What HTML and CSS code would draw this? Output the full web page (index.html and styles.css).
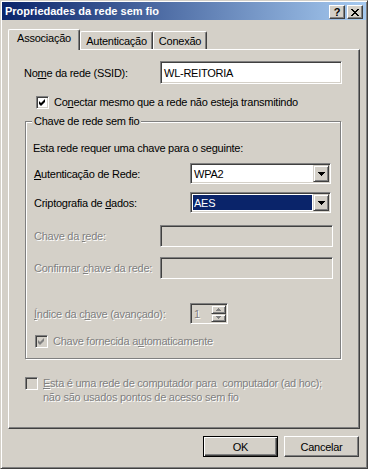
FILE: index.html
```html
<!DOCTYPE html>
<html lang="pt">
<head>
    <meta charset="UTF-8">
    <title>Propriedades da rede sem fio</title>
    <link rel="stylesheet" href="styles.css">
</head>
<body>
    <div class="window">
        <div class="titlebar">
            <span class="title">Propriedades da rede sem fio</span>
            <div class="caption-buttons">
                <span class="cap-btn help">?</span>
                <span class="cap-btn">
                    <svg width="8" height="7" viewBox="0 0 8 7"><path d="M0 0h2v1h1v1h2v-1h1v-1h2v1h-1v1h-1v1h-1v1h1v1h1v1h1v1h-2v-1h-1v-1h-2v1h-1v1h-2v-1h1v-1h1v-1h1v-1h-1v-1h-1v-1h-1z"/></svg>
                </span>
            </div>
        </div>

        <div class="client">
            <div class="tabs">
                <div class="tab active tab-assoc">Associação</div>
                <div class="tab tab-auth">Autenticação</div>
                <div class="tab tab-conn">Conexão</div>
            </div>

            <div class="panel">
                <div class="row ssid-row">
                    <span class="lbl lbl-ssid">No<u>m</u>e da rede (SSID):</span>
                    <div class="textbox ssid-box">WL-REITORIA</div>
                </div>

                <div class="check-row broadcast-row">
                    <span class="checkbox">
                        <svg width="7" height="7" viewBox="0 0 7 7"><polygon points="0,2 2,4 6,0 6,3 2,7 0,5"/></svg>
                    </span>
                    <span>Co<u>n</u>ectar mesmo que a rede não esteja transmitindo</span>
                </div>

                <div class="group">
                    <span class="group-title">Chave de rede sem fio</span>

                    <div class="intro">Esta rede requer uma chave para o seguinte:</div>

                    <div class="row combo-row">
                        <span class="lbl lbl-wide"><u>A</u>utenticação de Rede:</span>
                        <div class="combo">
                            <span class="combo-text">WPA2</span>
                            <span class="combo-btn">
                                <svg width="7" height="4" viewBox="0 0 7 4"><path d="M0 0h7v1h-1v1h-1v1h-1v1h-1v-1h-1v-1h-1v-1h-1z"/></svg>
                            </span>
                        </div>
                    </div>

                    <div class="row combo-row crypt-row">
                        <span class="lbl lbl-wide">Criptografia de <u>d</u>ados:</span>
                        <div class="combo">
                            <span class="combo-text selected">AES</span>
                            <span class="combo-btn">
                                <svg width="7" height="4" viewBox="0 0 7 4"><path d="M0 0h7v1h-1v1h-1v1h-1v1h-1v-1h-1v-1h-1v-1h-1z"/></svg>
                            </span>
                        </div>
                    </div>

                    <div class="row key-row">
                        <span class="lbl lbl-key disabled">Chave da <u>r</u>ede:</span>
                        <div class="textbox key-box off"></div>
                    </div>

                    <div class="row key-row confirm-row">
                        <span class="lbl lbl-key disabled">Confirmar <u>c</u>have da rede:</span>
                        <div class="textbox key-box off"></div>
                    </div>

                    <div class="row index-row">
                        <span class="lbl lbl-wide disabled"><u>Í</u>ndice da c<u>h</u>ave (avançado):</span>
                        <div class="spin">
                            <div class="textbox spin-box off"><span class="disabled">1</span></div>
                            <div class="spin-btns">
                                <span class="spin-btn">
                                    <svg width="5" height="3" viewBox="0 0 5 3"><path d="M0 3h5v-1h-1v-1h-1v-1h-1v1h-1v1h-1z"/></svg>
                                </span>
                                <span class="spin-btn">
                                    <svg width="5" height="3" viewBox="0 0 5 3"><path d="M0 0h5v1h-1v1h-1v1h-1v-1h-1v-1h-1z"/></svg>
                                </span>
                            </div>
                        </div>
                    </div>

                    <div class="check-row auto-row">
                        <span class="checkbox off">
                            <svg width="7" height="7" viewBox="0 0 7 7"><polygon points="0,2 2,4 6,0 6,3 2,7 0,5"/></svg>
                        </span>
                        <span class="disabled">Chave fornecida a<u>u</u>tomaticamente</span>
                    </div>
                </div>

                <div class="check-row adhoc-row">
                    <span class="checkbox off"></span>
                    <span class="disabled"><u>E</u>sta é uma rede de computador para &nbsp;computador (ad hoc);<br>não são usados pontos de acesso sem fio</span>
                </div>
            </div>

            <div class="buttons">
                <button class="btn default">OK</button>
                <button class="btn">Cancelar</button>
            </div>
        </div>
    </div>
</body>
</html>
```

FILE: styles.css
```css
body {
    margin: 0;
    padding: 0;
    background: #d4d0c8;
    font-family: "Liberation Sans", Arial, sans-serif;
    font-size: 11px;
    letter-spacing: -0.25px;
    color: #000;
}

.window {
    width: 368px;
    height: 469px;
    box-sizing: border-box;
    padding: 1px;
    background: #d4d0c8;
    border: 1px solid;
    border-color: #d4d0c8 #404040 #404040 #d4d0c8;
    box-shadow: inset 1px 1px #fff, inset -1px -1px #808080;
}

/* title bar */

.titlebar {
    height: 18px;
    display: flex;
    align-items: center;
    justify-content: space-between;
    padding: 0 3px;
    background: linear-gradient(to right, #0a246a, #a6caf0);
}

.title {
    color: #fff;
    font-weight: bold;
    font-size: 11px;
    letter-spacing: 0;
}

.caption-buttons {
    display: flex;
    gap: 2px;
    margin-top: 2px;
}

.cap-btn {
    width: 16px;
    height: 14px;
    box-sizing: border-box;
    display: flex;
    align-items: center;
    justify-content: center;
    background: #d4d0c8;
    border: 1px solid;
    border-color: #fff #404040 #404040 #fff;
    box-shadow: inset -1px -1px #808080;
}

.cap-btn.help {
    font-weight: bold;
    font-size: 11px;
    line-height: 12px;
}

/* tabs */

.client {
    padding: 9px 6px 0 6px;
}

.tabs {
    display: flex;
    align-items: flex-end;
    height: 20px;
    position: relative;
    z-index: 1;
}

.tab {
    height: 18px;
    box-sizing: border-box;
    text-align: center;
    line-height: 18px;
    background: #d4d0c8;
    border-top: 1px solid #fff;
    border-left: 1px solid #fff;
    border-right: 1px solid #404040;
    box-shadow: inset -1px 0 #808080;
    border-radius: 2px 2px 0 0;
}

.tab.active {
    height: 21px;
    margin-bottom: -1px;
    line-height: 17px;
}

.tab-assoc { width: 72px; }
.tab-auth { width: 73px; }
.tab-conn { width: 54px; }

.panel {
    height: 380px;
    box-sizing: border-box;
    padding: 11px 0 0 15px;
    border: 1px solid;
    border-color: #fff #404040 #404040 #fff;
    box-shadow: inset -1px -1px #808080;
}

/* rows */

.row {
    display: flex;
    align-items: center;
}

.lbl {
    flex: none;
    white-space: nowrap;
}

.lbl-ssid { width: 136px; }
.lbl-wide { width: 156px; }
.lbl-key { width: 126px; }

.disabled {
    color: #808080;
    text-shadow: 1px 1px #fff;
}

.textbox {
    box-sizing: border-box;
    background: #fff;
    border: 1px solid;
    border-color: #808080 #fff #fff #808080;
    box-shadow: inset 1px 1px #404040, inset -1px -1px #d4d0c8;
    padding-left: 3px;
    display: flex;
    align-items: center;
}

.textbox.off {
    background: #d4d0c8;
}

.ssid-box {
    width: 182px;
    height: 23px;
}

.check-row {
    display: flex;
    align-items: center;
    line-height: 13px;
    white-space: nowrap;
}

.checkbox {
    flex: none;
    width: 13px;
    height: 13px;
    box-sizing: border-box;
    display: flex;
    align-items: center;
    justify-content: center;
    background: #fff;
    border: 1px solid;
    border-color: #808080 #fff #fff #808080;
    box-shadow: inset 1px 1px #404040, inset -1px -1px #d4d0c8;
    margin-right: 5px;
}

.checkbox.off {
    background: #d4d0c8;
}

.checkbox.off svg {
    fill: #808080;
}

.broadcast-row {
    margin: 12px 0 0 12px;
}

/* group box */

.group {
    position: relative;
    width: 316px;
    box-sizing: border-box;
    margin: 12px 0 0 1px;
    padding: 20px 0 10px 8px;
    border: 1px solid #808080;
    box-shadow: inset 1px 1px #fff, 1px 1px #fff;
}

.group-title {
    position: absolute;
    top: -7px;
    left: 6px;
    padding: 0 2px;
    line-height: 13px;
    background: #d4d0c8;
}

.intro {
    line-height: 13px;
    margin-left: -1px;
}

.combo-row {
    margin-top: 8px;
}

.combo {
    width: 141px;
    height: 21px;
    box-sizing: border-box;
    display: flex;
    padding: 1px;
    background: #fff;
    border: 1px solid;
    border-color: #808080 #fff #fff #808080;
    box-shadow: inset 1px 1px #404040, inset -1px -1px #d4d0c8;
}

.combo-text {
    flex: 1;
    padding-left: 1px;
    margin: 1px;
    display: flex;
    align-items: center;
}

.combo-text.selected {
    background: #0a246a;
    color: #fff;
}

.combo-btn {
    width: 16px;
    flex: none;
    box-sizing: border-box;
    display: flex;
    align-items: center;
    justify-content: center;
    background: #d4d0c8;
    border: 1px solid;
    border-color: #d4d0c8 #404040 #404040 #d4d0c8;
    box-shadow: inset 1px 1px #fff, inset -1px -1px #808080;
}

.key-row {
    margin-top: 12px;
}

.confirm-row {
    margin-top: 10px;
}

.key-box {
    width: 173px;
    height: 22px;
}

.index-row {
    margin-top: 24px;
}

.spin {
    width: 38px;
    height: 21px;
    position: relative;
}

.spin-box {
    width: 38px;
    height: 21px;
}

.spin-btns {
    position: absolute;
    top: 2px;
    right: 2px;
    width: 15px;
    height: 17px;
    display: flex;
    flex-direction: column;
}

.spin-btn {
    flex: 1;
    box-sizing: border-box;
    display: flex;
    align-items: center;
    justify-content: center;
    background: #d4d0c8;
    border: 1px solid;
    border-color: #d4d0c8 #404040 #404040 #d4d0c8;
    box-shadow: inset 1px 1px #fff, inset -1px -1px #808080;
}

.spin-btn svg {
    fill: #808080;
}

.auto-row {
    margin: 11px 0 0 1px;
}

.adhoc-row {
    margin: 17px 0 0 1px;
    align-items: flex-start;
    line-height: 14px;
}

.adhoc-row .checkbox {
    margin-top: 1px;
}

/* buttons */

.buttons {
    display: flex;
    justify-content: flex-end;
    gap: 6px;
    margin-top: 7px;
    padding-right: 1px;
}

.btn {
    width: 75px;
    height: 21px;
    box-sizing: border-box;
    padding: 0;
    font-family: inherit;
    font-size: 11px;
    letter-spacing: inherit;
    color: #000;
    background: #d4d0c8;
    border: 1px solid;
    border-color: #fff #404040 #404040 #fff;
    box-shadow: inset -1px -1px #808080;
}

.btn.default {
    border-color: #000;
    box-shadow: inset 1px 1px #fff, inset -1px -1px #404040, inset -2px -2px #808080;
}
```
